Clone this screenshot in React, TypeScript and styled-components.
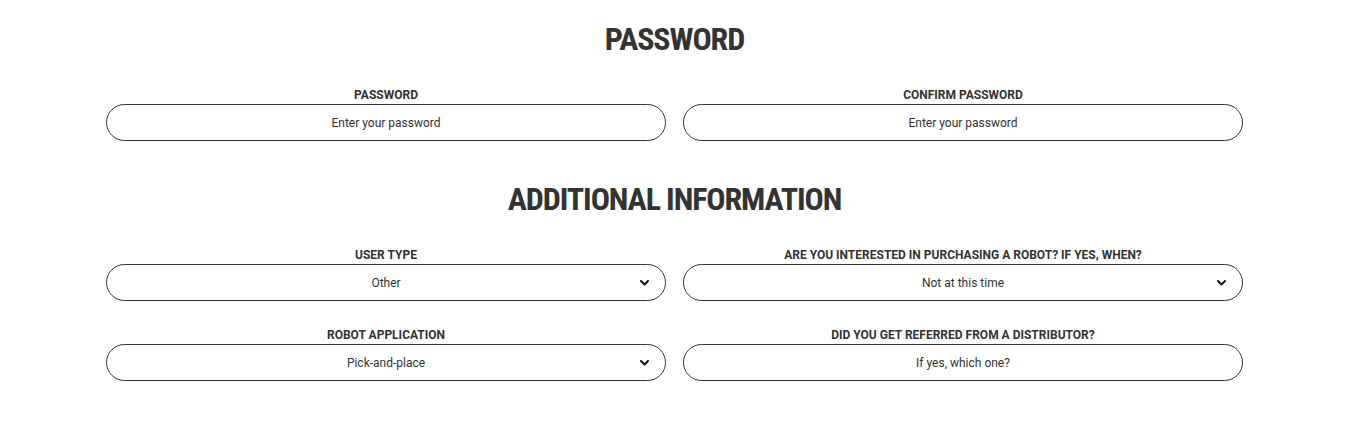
import React from 'react';
import styled, { createGlobalStyle } from 'styled-components';

const GlobalStyle = createGlobalStyle`
  html, body {
    margin: 0;
    padding: 0;
    background: #fff;
    font-family: Roboto, "Liberation Sans", sans-serif;
    color: #333;
  }
  * {
    box-sizing: border-box;
  }
`;

const Page = styled.div`
  width: 1137px;
  margin: 0 auto;
  padding-top: 21px;
`;

const Section = styled.section`
  display: flex;
  flex-direction: column;
  align-items: center;
  margin-bottom: 40px;
`;

const Heading = styled.h2`
  margin: 0 0 30px;
  font-size: 32px;
  line-height: 36px;
  font-weight: 700;
  font-stretch: 75%;
  letter-spacing: -1.1px;
  color: #333;
  text-transform: uppercase;
`;

const Grid = styled.div`
  width: 100%;
  display: grid;
  grid-template-columns: 1fr 1fr;
  column-gap: 17px;
  row-gap: 26px;
`;

const Field = styled.div`
  display: flex;
  flex-direction: column;
  align-items: stretch;
`;

const Label = styled.label`
  display: block;
  text-align: center;
  font-size: 12px;
  line-height: 16px;
  font-weight: 700;
  color: #333;
  margin-bottom: 1px;
  text-transform: uppercase;
`;

const Control = styled.div`
  position: relative;
  height: 37px;
  border: 1px solid #333;
  border-radius: 19px;
  display: flex;
  align-items: center;
  justify-content: center;
  font-size: 12px;
  color: #333;
  background: #fff;
`;

const Chevron = styled.svg`
  position: absolute;
  right: 15px;
  top: 50%;
  transform: translateY(-50%);
`;

type FieldProps = {
  label: string;
  value: string;
  select?: boolean;
};

const FormField: React.FC<FieldProps> = ({ label, value, select }) => (
  <Field>
    <Label>{label}</Label>
    <Control>
      {value}
      {select && (
        <Chevron width="11" height="8" viewBox="0 0 11 8">
          <polyline
            points="2,2 5.5,5.5 9,2"
            fill="none"
            stroke="#111"
            strokeWidth="2"
            strokeLinecap="round"
            strokeLinejoin="round"
          />
        </Chevron>
      )}
    </Control>
  </Field>
);

export default function App() {
  return (
    <>
      <GlobalStyle />
      <Page>
        <Section>
          <Heading>Password</Heading>
          <Grid>
            <FormField label="Password" value="Enter your password" />
            <FormField label="Confirm password" value="Enter your password" />
          </Grid>
        </Section>
        <Section>
          <Heading>Additional information</Heading>
          <Grid>
            <FormField label="User type" value="Other" select />
            <FormField
              label="Are you interested in purchasing a robot? If yes, when?"
              value="Not at this time"
              select
            />
            <FormField label="Robot application" value="Pick-and-place" select />
            <FormField
              label="Did you get referred from a distributor?"
              value="If yes, which one?"
            />
          </Grid>
        </Section>
      </Page>
    </>
  );
}
